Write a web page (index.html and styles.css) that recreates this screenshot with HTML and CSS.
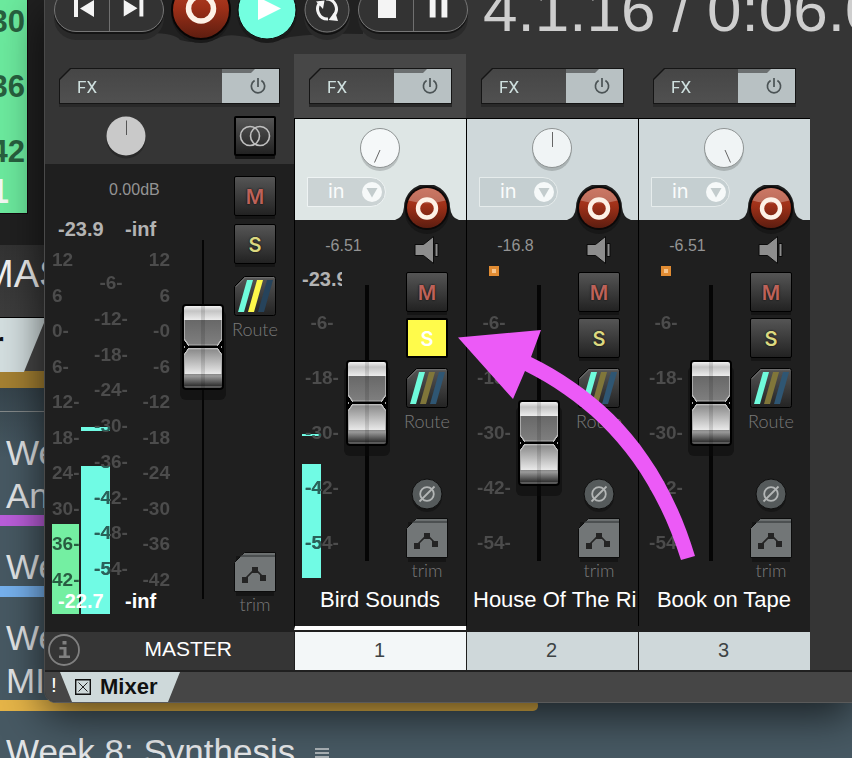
FILE: index.html
```
<!DOCTYPE html>
<html lang="en">
<head>
<meta charset="utf-8">
<title>Mixer</title>
<link rel="stylesheet" href="styles.css">
</head>
<body>
<svg class="defs" aria-hidden="true">
  <defs>
    <linearGradient id="g-red" x1="0" y1="0" x2="0" y2="1">
      <stop offset="0" stop-color="#b8452a"/><stop offset=".45" stop-color="#9e3018"/><stop offset="1" stop-color="#5c1d10"/>
    </linearGradient>
    <linearGradient id="g-btn" x1="0" y1="0" x2="0" y2="1">
      <stop offset="0" stop-color="#555"/><stop offset="1" stop-color="#232323"/>
    </linearGradient>
  </defs>
  <symbol id="power" viewBox="0 0 18 18">
    <path d="M5.600 3.600A6.600 6.600 0 1 0 12.400 3.600M9 1v9" fill="none" stroke="#4b5355" stroke-width="1.700"/>
  </symbol>
  <symbol id="trim" viewBox="0 0 42 44">
    <path d="M2 4H40V44H2z" fill="#151515"/>
    <path d="M.5 10.500L10.500.5H41.500V39.500H.5z" fill="#727677" stroke="#0c0c0c"/>
    <path d="M10 1.500H41V3H8.500z" fill="#6a6e6f"/><path d="M8 3H41V5H6z" fill="#4c5051"/>
    <path d="M11 27L21 17L29 25" fill="none" stroke="#242424" stroke-width="1.600"/>
    <path d="M8 25h6v6H8zM18 15h6v6h-6zM26 23h6v6h-6z" fill="#242424"/>
  </symbol>
  <symbol id="route-shell" viewBox="0 0 42 40">
    <path d="M.5 10.500L10.500.5H39.500Q41.500.5 41.500 2.500V37.500Q41.500 39.500 39.500 39.500H2.500Q.5 39.500.5 37.500z" fill="url(#g-btn)" stroke="#000"/>
    <path d="M2 10.500L11 1.700H40" fill="none" stroke="#707070"/>
  </symbol>
  <symbol id="route" viewBox="0 0 42 40">
    <use href="#route-shell"/>
    <path d="M13 4h6L10 36H4z" fill="#6ffbdc"/><path d="M23 4h6L20 36H14z" fill="#80763a"/><path d="M33 4h6L30 36H24z" fill="#2f5673"/>
  </symbol>
  <symbol id="route-master" viewBox="0 0 42 40">
    <use href="#route-shell"/>
    <path d="M13 4h6L10 36H4z" fill="#6ffbdc"/><path d="M23 4h6L20 36H14z" fill="#fdf84a"/><path d="M33 4h6L30 36H24z" fill="#26435b"/>
  </symbol>
  <symbol id="phase" viewBox="0 0 34 34">
    <circle cx="17" cy="19" r="15" fill="#161616"/>
    <circle cx="17" cy="16" r="15" fill="#555a5b" stroke="#0f0f0f"/>
    <circle cx="17" cy="16" r="6.800" fill="none" stroke="#b3b6b6" stroke-width="1.800"/>
    <path d="M9.500 23.500L24.500 8.500" stroke="#b3b6b6" stroke-width="1.800"/>
  </symbol>
  <symbol id="speaker" viewBox="0 0 26 28">
    <path d="M1 8.500H9.500L19.500.5V27.500L9.500 19.500H1z" fill="#8d8d8d" stroke="#0b0b0b"/>
    <path d="M21 7.500h3v13h-3z" fill="#8d8d8d" stroke="#0b0b0b"/>
  </symbol>
  <symbol id="arm" viewBox="0 0 64 52">
    <path d="M0 35Q8 33 9 22A23 23 0 0 1 55 22Q56 33 64 35V36H0z" fill="#1f1f1f"/>
    <circle cx="32" cy="27" r="22" fill="#171717"/>
    <circle cx="32" cy="23" r="22" fill="#0c0808"/>
    <circle cx="32" cy="23" r="20" fill="url(#g-red)"/>
    <path d="M13.500 15.500A20 20 0 0 1 50.500 15.500Q32 21 13.500 15.500z" fill="#fff" opacity=".28"/>
    <circle cx="32" cy="23.500" r="9" fill="none" stroke="#fdf1e6" stroke-width="4.400"/>
  </symbol>
  <symbol id="drop" viewBox="0 0 20 20">
    <circle cx="10" cy="10" r="10" fill="#f6f9f9"/><path d="M4.500 6H15.500L10 15.500z" fill="#c3cccd"/>
  </symbol>
</svg>

<div class="desktop">
  <div class="backdrop">
    <section class="back-daw">
      <div class="back-meter"><span>30</span><span>36</span><span>42</span><b>1</b></div>
      <div class="back-name">MAS</div>
      <div class="back-dock"><span class="back-tab">r</span></div>
    </section>
    <section class="notes">
      <article class="note purple"><p>We</p><p>An</p></article>
      <article class="note blue"><p>We</p></article>
      <article class="note gold"><p>We</p><p>MI</p></article>
      <article class="note"><p>Week 8: Synthesis
        <svg class="lines" viewBox="0 0 14 16"><path d="M0 1h14M0 5h14M0 9h14M0 13h8" stroke="#c9cdd0" stroke-width="1.600"/></svg></p></article>
    </section>
  </div>

  <main class="window">
    <header class="transport">
      <svg class="well" viewBox="0 0 320 48"><path d="M105 0V33Q130 33 135 40Q156 46 176 37Q185 33 205 38Q222 44 245 37Q275 33 318 34V0z" fill="#212121"/></svg>
      <div class="pill">
        <button aria-label="Previous"><svg viewBox="0 0 54 42"><path d="M19 11h4v17h-4zM39 11v17L25 19.500z" fill="#f4f4f4"/></svg></button>
        <button aria-label="Next"><svg viewBox="0 0 54 42"><path d="M30 11h4v17h-4zM14 11v17L28 19.500z" fill="#f4f4f4"/></svg></button>
      </div>
      <button class="round rec" aria-label="Record"><svg viewBox="0 0 60 60"><circle cx="30" cy="30" r="29" fill="url(#g-red)" stroke="#080505" stroke-width="2"/><circle cx="30" cy="28.500" r="12.500" fill="none" stroke="#fdf1e6" stroke-width="5.500"/></svg></button>
      <button class="round play" aria-label="Play"><svg viewBox="0 0 60 60"><circle cx="30" cy="30" r="29" fill="#73ffe0" stroke="#0b0b0b"/><path d="M21 17V40L44 28.500z" fill="#fff"/></svg></button>
      <button class="round loop" aria-label="Repeat"><svg viewBox="0 0 46 46"><circle cx="23" cy="23" r="22" fill="#333" stroke="#777"/><path d="M24 32A10 10 0 0 1 16.500 15M22 12A10 10 0 0 1 29.500 29" fill="none" stroke="#f4f4f4" stroke-width="3"/><path d="M12 14.500L20.500 13.500 19 22zM34 34L24.500 33 31 24.500z" fill="#f4f4f4"/></svg></button>
      <div class="pill">
        <button aria-label="Stop"><svg viewBox="0 0 54 42"><path d="M19 11h18v18H19z" fill="#f4f4f4"/></svg></button>
        <button aria-label="Pause"><svg viewBox="0 0 54 42"><path d="M16 11h6v18h-6zM28 11h6v18h-6z" fill="#f4f4f4"/></svg></button>
      </div>
      <output class="time">4.1.16 / 0:06.0</output>
    </header>

    <div class="mixer">
      <section class="master">
        <div class="master-head">
          <div class="fx"><div class="fx-box"><button class="fx-name">FX</button><button class="fx-power" aria-label="FX bypass"><svg><use href="#power"/></svg></button></div></div>
          <div class="master-pan">
            <svg class="knob" viewBox="0 0 40 44"><circle cx="20" cy="23" r="19.500" fill="#292929"/><circle cx="20" cy="20" r="19.500" fill="#c9c9c9"/><path d="M20.500 4.500V19" stroke="#555"/></svg>
            <button class="key stereo" aria-label="Stereo"><svg viewBox="0 0 32 22"><circle cx="11" cy="11" r="9.500"/><circle cx="21" cy="11" r="9.500"/></svg></button>
          </div>
        </div>
        <div class="master-body">
          <div class="master-left">
            <div class="gain">0.00dB</div>
            <div class="peaks"><span>-23.9</span><span>-inf</span></div>
            <div class="levels">
              <div class="meters"><i class="m-green"></i><i class="m-cyan"></i></div>
              <i class="m-hold"></i>
              <ul class="scale s-left"><li>12</li><li>6</li><li>0-</li><li>6-</li><li>12-</li><li>18-</li><li>24-</li><li>30-</li><li>36-</li><li>42-</li></ul>
              <ul class="scale s-mid"><li>-6-</li><li>-12-</li><li>-18-</li><li>-24-</li><li>-30-</li><li>-36-</li><li>-42-</li><li>-48-</li><li>-54-</li></ul>
              <ul class="scale s-right"><li>12</li><li>6</li><li>-0</li><li>-6</li><li>-12</li><li>-18</li><li>-24</li><li>-30</li><li>-36</li><li>-42</li></ul>
              <div class="peaks rms"><span>-22.7</span><span>-inf</span></div>
            </div>
          </div>
          <input class="fader master-fader" type="range" aria-label="Master volume" min="0" max="273" value="209">
          <div class="keys">
            <button class="key mute">M</button>
            <button class="key solo">S</button>
            <button class="route" aria-label="Master routing"><svg class="b42"><use href="#route-master"/></svg></button>
            <span class="cap">Route</span>
            <button class="trim" aria-label="Master envelope"><svg class="b44"><use href="#trim"/></svg></button>
            <span class="cap">trim</span>
          </div>
        </div>
        <div class="master-foot">
          <svg class="info" viewBox="0 0 32 32"><circle cx="16" cy="16" r="15" fill="none" stroke="#808080" stroke-width="1.800"/><path d="M14.500 7h4v3.500h-4zM11.500 13h7v8.500h3.500v2.500H11v-2.500h4.500v-6h-4z" fill="#808080"/></svg>
          <span>MASTER</span>
        </div>
      </section>

      <section class="track selected">
        <div class="track-head"><div class="fx"><div class="fx-box"><button class="fx-name">FX</button><button class="fx-power" aria-label="FX bypass"><svg><use href="#power"/></svg></button></div></div></div>
        <div class="panel">
          <svg class="knob" viewBox="0 0 40 44"><circle cx="20" cy="23.500" r="19.500" fill="#b9c0c0"/><circle cx="20" cy="20" r="19.500" fill="#f5f8f9" stroke="#8e9393"/><path d="M20 22L14.500 34.500" stroke="#666"/></svg>
          <div class="input"><select aria-label="Input"><option>in</option></select><svg><use href="#drop"/></svg></div>
          <button class="arm" aria-label="Record arm"><svg><use href="#arm"/></svg></button>
        </div>
        <div class="track-body">
          <div class="gain">-6.51</div>
          <div class="track-left">
            <div class="clip">-23.9</div>
            <div class="levels"><i class="t-meter"></i><i class="t-hold"></i>
              <ul class="scale s-track live"><li>-6-</li><li>-18-</li><li>-30-</li><li>-42-</li><li>-54-</li></ul></div>
          </div>
          <input class="fader" type="range" aria-label="Bird Sounds volume" min="0" max="190" value="115">
          <div class="keys">
            <button aria-label="Monitor"><svg class="spk"><use href="#speaker"/></svg></button>
            <button class="key mute">M</button>
            <button class="key solo on">S</button>
            <button class="route" aria-label="Routing"><svg class="b42"><use href="#route"/></svg></button>
            <span class="cap">Route</span>
            <button class="phase" aria-label="Phase"><svg class="ph"><use href="#phase"/></svg></button>
            <button class="trim" aria-label="Envelope"><svg class="b44"><use href="#trim"/></svg></button>
            <span class="cap">trim</span>
          </div>
        </div>
        <div class="name">Bird Sounds</div>
        <div class="number">1</div>
      </section>

      <section class="track">
        <div class="track-head"><div class="fx"><div class="fx-box"><button class="fx-name">FX</button><button class="fx-power" aria-label="FX bypass"><svg><use href="#power"/></svg></button></div></div></div>
        <div class="panel">
          <svg class="knob" viewBox="0 0 40 44"><circle cx="20" cy="23.500" r="19.500" fill="#abb3b4"/><circle cx="20" cy="20" r="19.500" fill="#f0f4f5" stroke="#8e9393"/><path d="M20.500 4V19" stroke="#666"/></svg>
          <div class="input"><select aria-label="Input"><option>in</option></select><svg><use href="#drop"/></svg></div>
          <button class="arm" aria-label="Record arm"><svg><use href="#arm"/></svg></button>
        </div>
        <div class="track-body">
          <div class="gain">-16.8</div>
          <div class="track-left">
            <div class="clip"><i class="lamp"></i></div>
            <div class="levels"><ul class="scale s-track"><li>-6-</li><li>-18-</li><li>-30-</li><li>-42-</li><li>-54-</li></ul></div>
          </div>
          <input class="fader" type="range" aria-label="House Of The Ri volume" min="0" max="190" value="75">
          <div class="keys">
            <button aria-label="Monitor"><svg class="spk"><use href="#speaker"/></svg></button>
            <button class="key mute">M</button>
            <button class="key solo">S</button>
            <button class="route" aria-label="Routing"><svg class="b42"><use href="#route"/></svg></button>
            <span class="cap">Route</span>
            <button class="phase" aria-label="Phase"><svg class="ph"><use href="#phase"/></svg></button>
            <button class="trim" aria-label="Envelope"><svg class="b44"><use href="#trim"/></svg></button>
            <span class="cap">trim</span>
          </div>
        </div>
        <div class="name">House Of The Ri</div>
        <div class="number">2</div>
      </section>

      <section class="track">
        <div class="track-head"><div class="fx"><div class="fx-box"><button class="fx-name">FX</button><button class="fx-power" aria-label="FX bypass"><svg><use href="#power"/></svg></button></div></div></div>
        <div class="panel">
          <svg class="knob" viewBox="0 0 40 44"><circle cx="20" cy="23.500" r="19.500" fill="#abb3b4"/><circle cx="20" cy="20" r="19.500" fill="#f0f4f5" stroke="#8e9393"/><path d="M21 22L26.500 34.500" stroke="#666"/></svg>
          <div class="input"><select aria-label="Input"><option>in</option></select><svg><use href="#drop"/></svg></div>
          <button class="arm" aria-label="Record arm"><svg><use href="#arm"/></svg></button>
        </div>
        <div class="track-body">
          <div class="gain">-6.51</div>
          <div class="track-left">
            <div class="clip"><i class="lamp"></i></div>
            <div class="levels"><ul class="scale s-track"><li>-6-</li><li>-18-</li><li>-30-</li><li>-42-</li><li>-54-</li></ul></div>
          </div>
          <input class="fader" type="range" aria-label="Book on Tape volume" min="0" max="190" value="115">
          <div class="keys">
            <button aria-label="Monitor"><svg class="spk"><use href="#speaker"/></svg></button>
            <button class="key mute">M</button>
            <button class="key solo">S</button>
            <button class="route" aria-label="Routing"><svg class="b42"><use href="#route"/></svg></button>
            <span class="cap">Route</span>
            <button class="phase" aria-label="Phase"><svg class="ph"><use href="#phase"/></svg></button>
            <button class="trim" aria-label="Envelope"><svg class="b44"><use href="#trim"/></svg></button>
            <span class="cap">trim</span>
          </div>
        </div>
        <div class="name">Book on Tape</div>
        <div class="number">3</div>
      </section>
    </div>

    <footer class="dock">
      <span class="bang">!</span>
      <button class="tab"><svg viewBox="0 0 16 16"><path d="M.7.7H15.300V15.300H.7z" fill="none" stroke="#111" stroke-width="1.400"/><path d="M3.500 3.500L12.500 12.500M12.500 3.500L3.500 12.500" stroke="#222"/></svg>Mixer</button>
    </footer>
  </main>

  <svg class="arrow" viewBox="0 0 240 234"><path d="M0 8.500L83 1 73 28C142 62 204 118 237 227L223 231C190 128 132 75 67 42L55 70z" fill="#ec5af7"/></svg>
</div>
</body>
</html>
```
FILE: styles.css
```
* { box-sizing: border-box; }

body {
  margin: 0;
  background: #475963;
  font-family: "Liberation Sans", Arial, sans-serif;
}

button, select, input { margin: 0; font: inherit; }
button { padding: 0; border: 0; background: none; color: inherit; }
svg { display: block; }
ul { margin: 0; padding: 0; list-style: none; }
p { margin: 0; }
.defs { position: absolute; width: 0; height: 0; }

.desktop { position: relative; height: 100vh; overflow: hidden; }

/* windows behind the mixer */
.back-daw { width: 64px; height: 388px; background: #202020; }
.back-meter {
  display: flex;
  flex-direction: column;
  align-items: flex-end;
  width: 28px;
  height: 214px;
  padding: 4px 2px 0 0;
  border-right: 1px solid #13050c;
  border-bottom: 1px solid #13050c;
  background: #6cea9e;
  color: #28603f;
  font-size: 31px;
  font-weight: bold;
  line-height: 36px;
}
.back-meter span { margin-bottom: 29px; }
.back-meter b { margin: -26px 16px 0 0; color: #f4f9f5; font-size: 35px; }
.back-name {
  height: 72px;
  margin-top: 31px;
  background: linear-gradient(#333, #3d3d3d);
  color: #f4f4f4;
  font-size: 38px;
  line-height: 58px;
  text-indent: -18px;
}
.back-dock {
  height: 71px;
  border-top: 1px solid #000;
  border-bottom: 17px solid #a58132;
  background: #464646;
}
.back-tab {
  display: block;
  width: 46px;
  height: 54px;
  background: #d4dfe0;
  clip-path: polygon(0 0, 100% 0, 52% 100%, 0 100%);
  color: #111;
  font-size: 35px;
  font-weight: bold;
  line-height: 52px;
  text-indent: -10px;
}
.notes { padding-top: 23px; background: linear-gradient(#36444c, #475963 70px); }
.note { padding-top: 19px; color: #e4e6e8; font-size: 35px; line-height: 43px; }
.note:first-child { border-top: 1px solid #84898a; }
.note p { padding-left: 6px; white-space: nowrap; }
.note::after { content: ""; display: block; width: 538px; height: 11px; margin-top: -2px; border-radius: 0 5px 5px 0; }
.purple::after { background: #bb5edb; }
.blue::after { background: #76b1ee; }
.gold::after { background: #e6b548; }
.lines { display: inline-block; width: 14px; height: 16px; margin-left: 10px; }

/* mixer window */
.window {
  position: absolute;
  top: 0;
  left: 44px;
  right: 0;
  display: flex;
  flex-direction: column;
  border-left: 1px solid #4a4a4a;
  border-bottom: 1px solid #5a5a5a;
  border-radius: 0 0 0 12px;
  background: #353535;
  box-shadow: 0 12px 44px rgba(0, 0, 0, .65);
}

.transport {
  position: relative;
  display: flex;
  align-items: center;
  height: 20px;
  margin-bottom: 34px;
  padding-left: 9px;
  clip-path: inset(0 0 -34px 0);
}
.well { position: absolute; top: 0; left: 0; width: 320px; height: 48px; }
.pill {
  position: relative;
  display: flex;
  height: 44px;
  border: 1px solid #777;
  border-radius: 24px;
  background: #333;
  box-shadow: 0 2px 0 #151515, 0 8px 0 #2a2a2a;
}
.pill button { width: 54px; height: 42px; }
.pill button + button { border-left: 1px solid #707070; }
.round { position: relative; flex: none; border-radius: 50%; box-shadow: 0 3px 0 #1a1a1a; }
.rec { width: 60px; margin-left: 7px; }
.play { width: 60px; margin-left: 6px; }
.loop { width: 46px; margin-left: 7px; box-shadow: 0 2px 0 #111, 0 7px 0 #2a2a2a; }
.loop + .pill { margin-left: 8px; }
.time { margin-left: 15px; color: #cecece; font-size: 62px; line-height: 58px; white-space: nowrap; }

.mixer { display: flex; border-bottom: 2px solid #202020; }

/* fx slot */
.fx { filter: drop-shadow(0 3px 0 #292929); }
.fx-box {
  position: relative;
  display: flex;
  height: 36px;
  padding: 1px;
  background: #151515;
  clip-path: polygon(0 11px, 11px 0, 100% 0, 100% 100%, 0 100%);
}
.fx-box::before {
  content: "";
  position: absolute;
  top: 1px;
  left: 37px;
  right: 25px;
  height: 4px;
  background: rgba(30, 30, 30, .5);
  clip-path: polygon(0 0, 100% 0, calc(100% - 4px) 100%, 4px 100%);
}
.fx-name {
  flex: 1;
  padding-left: 17px;
  background: linear-gradient(#464646, #505050);
  clip-path: polygon(0 11px, 11px 0, 100% 0, 100% 100%, 0 100%);
  color: #cfe0df;
  font: 17px/36px Roboto, sans-serif;
  text-align: left;
}
.fx-power { display: flex; align-items: center; justify-content: flex-end; width: 57px; padding-right: 12px; background: #b8c1c3; }
.fx-power svg { width: 18px; height: 18px; }

.knob { width: 40px; height: 44px; }

/* master strip */
.master { width: 249px; }
.master-head { height: 110px; padding: 14px 14px 0; }
.master-pan { display: flex; justify-content: space-between; padding: 12px 4px 0 47px; }
.master-body { display: grid; grid-template-columns: 137px 42px 62px; height: 468px; background: #1f1f1f; }
.master-left { padding-left: 7px; }
.gain { color: #949494; font-size: 16px; }
.master .gain { height: 50px; padding-left: 57px; line-height: 52px; }
.peaks { display: grid; grid-template-columns: 67px 1fr; padding-left: 6px; color: #b3b3b3; font-size: 20px; font-weight: bold; line-height: 30px; }
.levels { display: grid; }
.levels > * { grid-area: 1 / 1; }
.master .levels { height: 370px; }
.meters { display: flex; align-items: flex-end; gap: 2px; }
.m-green { width: 27px; height: 90px; background: #74efa2; }
.m-cyan { width: 29px; height: 148px; background: #70fbe4; }
.m-hold { width: 29px; height: 4px; margin: 183px 0 0 29px; background: #70fbe4; }
.rms { align-self: end; margin-bottom: 3px; color: #fff; line-height: 20px; }
.scale {
  display: flex;
  flex-direction: column;
  justify-content: space-between;
  background: #4c4c4c no-repeat;
  -webkit-background-clip: text;
  background-clip: text;
  color: transparent;
  font-size: 19px;
  font-weight: bold;
  line-height: 20px;
}
.s-left { width: 32px; height: 340px; margin-top: 6px; background-image: linear-gradient(#285c40, #285c40); background-size: 27px 66px; background-position: 0 274px; }
.s-right { justify-self: end; height: 340px; margin: 6px 12px 0 0; text-align: right; }
.s-mid {
  width: 36px;
  height: 306px;
  margin: 29px 0 0 41px;
  background-image: linear-gradient(#28625a, #28625a), linear-gradient(#28625a, #28625a);
  background-size: 17px 113px, 17px 4px;
  background-position: 0 193px, 0 154px;
  text-align: center;
}
.keys { display: flex; flex-direction: column; align-items: center; }
.master .keys { padding-top: 12px; }
.key {
  display: flex;
  align-items: center;
  justify-content: center;
  flex: none;
  width: 42px;
  height: 40px;
  border: 1px solid #000;
  border-radius: 2px;
  background: linear-gradient(#555, #222);
  box-shadow: 0 4px 0 -1px #151515;
  font: 600 20px/38px Inter, sans-serif;
  text-shadow: 0 0 2px #000;
}
.mute, .solo { padding-top: 2px; }
.stereo { border-width: 2px; }
.stereo svg { width: 32px; height: 22px; fill: none; stroke: #c0c0c0; stroke-width: 1.600px; }
.mute { color: #bd625a; }
.solo { margin-top: 6px; color: #dcd880; }
.master .solo { margin-top: 8px; }
.solo.on { border-width: 2px; background: #fffb4b; box-shadow: none; color: #fff; text-shadow: none; }
.b42 { width: 42px; height: 40px; }
.b44 { width: 42px; height: 44px; }
.route { margin-top: 10px; }
.master .route { margin-top: 12px; }
.cap { color: #7a7a7a; font: 300 18px/26px Lato, sans-serif; }
.trim { height: 40px; margin-top: 10px; }
.master .trim { margin-top: 210px; }
.trim + .cap { line-height: 24px; }
.phase { height: 30px; margin-top: 44px; }
.ph { width: 34px; height: 34px; }
.spk { width: 26px; height: 28px; margin-bottom: 8px; }
.master-foot { display: flex; align-items: center; height: 38px; padding: 0 0 2px 3px; }
.master-foot span { flex: 1; padding: 0 62px 2px 0; color: #fff; font-size: 21px; text-align: right; }
.info { width: 32px; height: 32px; }

/* faders */
.fader {
  appearance: none;
  writing-mode: vertical-lr;
  direction: rtl;
  width: 42px;
  height: 276px;
  margin: 21px 0 0 1px;
  background: linear-gradient(#050505, #050505) center / 4px 100% no-repeat;
}
.master-fader { height: 359px; margin: 76px 0 0; background-size: 2px 100%; }
.fader::-webkit-slider-runnable-track { width: 42px; height: 100%; }
.fader::-webkit-slider-thumb {
  appearance: none;
  width: 42px;
  height: 86px;
  border: 2px solid #000;
  border-radius: 4px;
  background:
    linear-gradient(rgba(0, 0, 0, .12), rgba(0, 0, 0, .12)) center / 4px 100% no-repeat,
    linear-gradient(to top right, #000 40%, #ccc 46%, #aaa 58%, transparent 64%) 0 33px / 5px 7px no-repeat,
    linear-gradient(to top left, #000 40%, #ccc 46%, #aaa 58%, transparent 64%) 100% 33px / 5px 7px no-repeat,
    linear-gradient(to bottom right, #000 40%, #ccc 46%, #aaa 58%, transparent 64%) 0 42px / 5px 7px no-repeat,
    linear-gradient(to bottom left, #000 40%, #ccc 46%, #aaa 58%, transparent 64%) 100% 42px / 5px 7px no-repeat,
    linear-gradient(#aaa, #aaa) 0 14px / 1px 54px no-repeat,
    linear-gradient(#aaa, #aaa) 100% 14px / 1px 54px no-repeat,
    linear-gradient(#f2f2f2, #c4c4c4 5px, #ececec 14px, #686868 14px, #7e7e7e 38px, #b0b0b0 39px, #000 40px, #000 42px, #ccc 42px, #8d8d8d 44px, #e9e9e9 68px, #858585 68px, #9a9a9a 70px, #303030 80px, #888 81px, #222);
  box-shadow: 0 8px 0 2px rgba(10, 10, 10, .5);
}

/* track strips */
.track { width: 172px; }
.track-head { height: 64px; padding: 14px 14px 0 15px; }
.selected .track-head { background: #474747; }
.panel {
  position: relative;
  height: 102px;
  padding: 9px 0 0 12px;
  border-top: 1px solid #000;
  border-left: 1px solid #000;
  background: #cfd8da;
}
.selected .panel { background: #dee6e5; }
.panel .knob { margin-left: 53px; }
.input {
  display: flex;
  align-items: center;
  width: 79px;
  height: 30px;
  margin-top: 5px;
  padding-right: 3px;
  border: 1px solid #e6ecec;
  border-radius: 0 15px 15px 0;
  background: #c5cfd1;
}
.selected .input { background: #cbd3d4; border-color: #eff4f4; }
.input select {
  flex: 1;
  min-width: 0;
  height: 28px;
  padding: 0 0 1px 20px;
  border: 0;
  appearance: none;
  background: none;
  color: #fafcfc;
  font: 400 20px/27px Inter, sans-serif;
}
.input svg { width: 20px; height: 20px; }
.arm { position: absolute; top: 66px; left: 100px; width: 64px; height: 52px; }
.arm svg { width: 64px; height: 52px; }
.track-body {
  display: grid;
  grid-template: 44px 320px / 50px 43px 1fr;
  border-left: 1px solid #000;
  background: #1f1f1f;
}
.track .gain { grid-column: 1 / 3; padding: 2px 0 0 4px; line-height: 48px; text-align: center; }
.track-left { grid-area: 2 / 1; }
.track-body .fader { grid-area: 2 / 2; }
.track .keys { grid-area: 1 / 3 / 3 / 4; padding-top: 16px; }
.clip { overflow: hidden; width: 40px; height: 30px; margin-left: 7px; color: #b3b3b3; font-size: 20px; font-weight: bold; line-height: 30px; }
.lamp { display: block; width: 10px; height: 10px; margin: 2px 0 0 15px; border: 3px solid #e08b32; background: #f5c48c; }
.t-meter { width: 19px; height: 114px; margin: 170px 0 0 7px; background: #70fbe4; }
.t-hold { width: 19px; height: 2px; margin: 140px 0 0 7px; background: #70fbe4; }
.s-track { height: 240px; margin: 19px 0 0 4px; text-align: center; }
.s-track.live {
  background-image: linear-gradient(#28625a, #28625a), linear-gradient(#28625a, #28625a);
  background-size: 22px 114px, 22px 2px;
  background-position: 0 151px, 0 121px;
}
.name {
  overflow: hidden;
  height: 42px;
  margin-right: 0;
  padding: 0 7px 0 6px;
  border-left: 1px solid #000;
  background: #1f1f1f;
  color: #fff;
  font-size: 22px;
  line-height: 32px;
  text-align: center;
  white-space: nowrap;
}
.number {
  height: 44px;
  padding-right: 2px;
  border-top: 6px solid #1f1f1f;
  border-left: 1px solid #1f1f1f;
  background: #cfd8da;
  color: #3d4344;
  font-size: 20px;
  line-height: 36px;
  text-align: center;
}
.selected .name { height: 46px; border-bottom: 4px solid #fff; }
.selected .number { height: 40px; border-top-width: 2px; background: #f3f7f8; }

/* dock */
.dock { display: flex; height: 30px; border-radius: 0 0 0 11px; background: #464646; }
.bang { width: 15px; padding-left: 6px; color: #fff; font-size: 21px; line-height: 26px; }
.tab {
  display: flex;
  align-items: center;
  gap: 9px;
  width: 120px;
  padding: 0 0 0 15px;
  background: #ced9da;
  clip-path: polygon(0 0, 100% 0, 90% 100%, 10% 100%);
  color: #111;
  font-size: 22px;
  font-weight: bold;
}
.tab svg { width: 16px; height: 16px; }

/* callout */
.arrow { position: absolute; top: 329px; left: 458px; width: 240px; height: 234px; pointer-events: none; }
```
